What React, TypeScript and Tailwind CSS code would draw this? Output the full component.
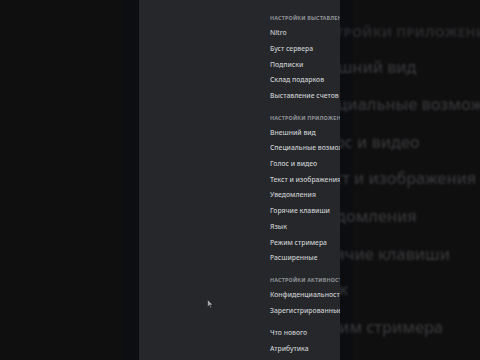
const sections = [
  {
    title: "Настройки выставления счетов",
    items: ["Nitro", "Буст сервера", "Подписки", "Склад подарков", "Выставление счетов"],
  },
  {
    title: "Настройки приложения",
    items: [
      "Внешний вид",
      "Специальные возможности",
      "Голос и видео",
      "Текст и изображения",
      "Уведомления",
      "Горячие клавиши",
      "Язык",
      "Режим стримера",
      "Расширенные",
    ],
  },
  {
    title: "Настройки активности",
    items: ["Конфиденциальность активности", "Зарегистрированные игры"],
  },
  {
    title: "",
    items: ["Что нового", "Атрибутика"],
  },
];

const SettingsList = () => {
  return (
    <div className="flex flex-col gap-[7px] whitespace-nowrap" style={{ fontFamily: '"Noto Sans", sans-serif' }}>
      {sections.map((section, i) => (
        <div key={i} className="flex flex-col">
          {section.title && (
            <div className="h-[14px] flex items-center text-[5.4px] font-bold uppercase tracking-[0.03em] text-[#8e9297]">
              {section.title}
            </div>
          )}
          {section.items.map((item) => (
            <div key={item} className="h-[15.7px] flex items-center text-[6.8px] font-medium text-[#c9ccd0]">
              {item}
            </div>
          ))}
        </div>
      ))}
    </div>
  );
};

const Cursor = () => (
  <svg width="7" height="10" viewBox="0 0 7 10" className="absolute left-[68px] top-[299px] opacity-80">
    <path d="M0.5 0.5 L0.5 8 L2.3 6.3 L3.6 9.3 L4.7 8.8 L3.5 5.9 L6 5.9 Z" fill="#c8c8c8" stroke="#1a1a1a" strokeWidth="0.6" />
  </svg>
);

export default function App() {
  return (
    <div className="w-[480px] h-[360px] flex overflow-hidden bg-[#0f0f10]">
      <div className="w-[122px] bg-[#0f0f10]" />
      <div className="w-[17px] bg-[#0c0e12]" />

      <div className="relative w-[201px] h-full overflow-hidden bg-[#25272a] pl-[131px] pt-[11.5px]">
        <SettingsList />
        <Cursor />
      </div>

      <div className="flex-1 h-full overflow-hidden bg-[linear-gradient(to_right,#0b0d11_0,#0b0d11_13px,#0f0f10_13px)]">
        <div className="ml-[-32px] mt-[-219px] origin-top-left scale-[2.37] opacity-20 blur-[0.4px]">
          <SettingsList />
        </div>
      </div>
    </div>
  );
}
